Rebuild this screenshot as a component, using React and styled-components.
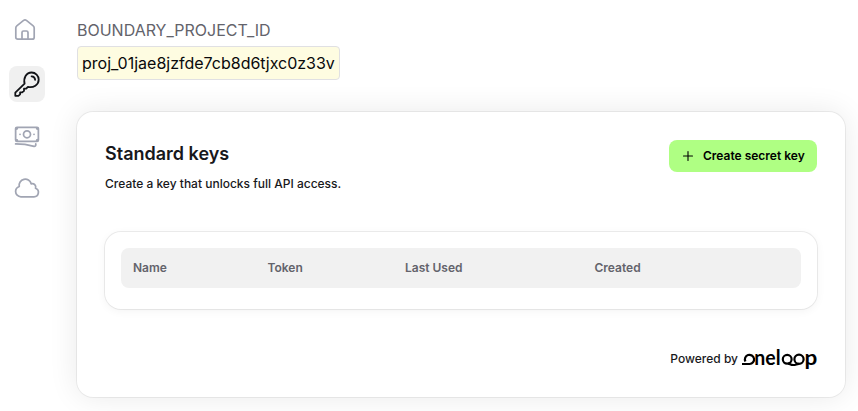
import React from "react";
import styled, { createGlobalStyle } from "styled-components";
import { HiOutlineBanknotes, HiOutlineCloud } from "react-icons/hi2";

const GlobalStyle = createGlobalStyle`
  * { box-sizing: border-box; }
  body { margin: 0; background: #fff; font-family: Inter, sans-serif; overflow: hidden; }
  h2, p { margin: 0; }
`;

const Page = styled.div`
  display: flex;
  width: 858px;
  height: 411px;
  overflow: hidden;
`;

const Sidebar = styled.nav`
  display: flex;
  flex-direction: column;
  gap: 16px;
  width: 77px;
  padding: 12px 9px;
`;

const NavItem = styled.a`
  display: flex;
  align-items: center;
  justify-content: center;
  width: 36px;
  height: 36px;
  border-radius: 8px;
  color: ${(p) => (p.$active ? "#111317" : "#a1a5b3")};
  background: ${(p) => (p.$active ? "#f0f0f0" : "transparent")};
  &:first-child { margin-bottom: 2px; }
`;

const Main = styled.main`
  display: flex;
  flex-direction: column;
  align-items: flex-start;
  width: 768px;
  padding-top: 18px;
`;

const ProjectLabel = styled.div`
  font-size: 16px;
  line-height: 24px;
  color: #63636b;
`;

const ProjectId = styled.div`
  margin-top: 4px;
  height: 34px;
  padding: 4px;
  border: 1px solid #e0e0e3;
  border-radius: 4px;
  background: #fefce1;
  color: #09090b;
  font-size: 16px;
  line-height: 24px;
`;

const Card = styled.section`
  width: 768px;
  height: 285px;
  margin-top: 32px;
  padding: 28px;
  border-radius: 16px;
  background: #fff;
  box-shadow: 0 0 0 1px rgba(0, 0, 0, 0.06), 0 0 30px rgba(0, 0, 0, 0.09);
`;

const CardHeader = styled.header`
  display: flex;
  justify-content: space-between;
  align-items: flex-start;
  height: 92px;
`;

const Title = styled.h2`
  font-size: 18px;
  line-height: 28px;
  font-weight: 600;
  color: #18181b;
`;

const Description = styled.p`
  margin-top: 6px;
  font-size: 12px;
  line-height: 20px;
  font-weight: 500;
  color: #18181b;
`;

const CreateButton = styled.button`
  display: flex;
  align-items: center;
  gap: 8px;
  height: 32px;
  width: 148px;
  padding: 0 12px;
  border: 0;
  border-radius: 8px;
  background: #afff83;
  color: #000;
  font: 600 12px/16px Inter, sans-serif;
  white-space: nowrap;
`;

const TableCard = styled.div`
  height: 77px;
  padding: 16px;
  border-radius: 16px;
  box-shadow: 0 0 0 1px rgba(0, 0, 0, 0.07), 0 2px 10px rgba(0, 0, 0, 0.05);
`;

const TableHead = styled.div`
  display: grid;
  grid-template-columns: 134.5px 137.5px 189.5px 1fr;
  align-items: center;
  height: 40px;
  padding-left: 12px;
  border-radius: 8px;
  background: #f1f1f1;
  color: #63636b;
  font-size: 12px;
  line-height: 16px;
  font-weight: 600;
`;

const Footer = styled.footer`
  display: flex;
  align-items: center;
  justify-content: flex-end;
  gap: 4px;
  margin-top: 36px;
  height: 28px;
  color: #18181b;
  font-size: 12px;
  line-height: 16px;
  font-weight: 500;
`;

const Stroke = styled.svg`
  display: block;
  fill: none;
  stroke: currentColor;
  stroke-linecap: round;
  stroke-linejoin: round;
`;

const Wordmark = styled.svg`
  display: block;
  overflow: visible;
  fill: none;
  stroke: #000;
  stroke-width: 2.2;
  text { fill: #000; stroke: none; font: 700 20.8px Lato, sans-serif; }
`;

const HomeIcon = () => (
  <Stroke width="28" height="28" viewBox="0 0 28 28" strokeWidth="1.7">
    <path d="M2.8 11.9Q2.8 10.6 3.8 9.8L10.6 4.4Q12 3.4 13.4 4.4L20.2 9.8Q21.2 10.6 21.2 11.9V21.2Q21.2 23.2 19.2 23.2H4.8Q2.8 23.2 2.8 21.2Z" />
    <path d="M9 23v-6.5q0-1.5 1.5-1.5h3q1.5 0 1.5 1.5V23" />
  </Stroke>
);

const KeyIcon = () => (
  <Stroke width="28" height="28" viewBox="0 0 28 28" strokeWidth="1.8">
    <path d="M11.6 13.6C10.2 8 13.2 2.5 18.6 2.5A7.1 7.1 0 0 1 25.7 9.6C25.7 15 20.4 18.1 14.9 16.9L13.2 18.7H11V20.9L9.2 22.4H7.1V24.3L5.4 25.8H2.3V22.7Z" />
    <path d="M18.6 6.3q3.3.2 3.5 3.5" />
  </Stroke>
);

const OneloopLogo = () => (
  <Wordmark width="75" height="28" viewBox="0 -0.7 75 28">
    <path d="M0 18.3H7.6A4.6 4.6 0 1 0 3.4 15.8" />
    <text x="12.3" y="19.3" textLength="26.3" lengthAdjust="spacingAndGlyphs">nel</text>
    <circle cx="45.2" cy="13.6" r="4.4" />
    <circle cx="57" cy="13.6" r="4.6" />
    <path d="M46 18C48 18 48.4 19.3 51.2 19.3C54 19.3 54.4 18.2 57 18.2" />
    <text x="62.5" y="19.3" textLength="12.8" lengthAdjust="spacingAndGlyphs">p</text>
  </Wordmark>
);

export default function App() {
  return (
    <>
      <GlobalStyle />
      <Page>
        <Sidebar>
          <NavItem><HomeIcon /></NavItem>
          <NavItem $active><KeyIcon /></NavItem>
          <NavItem><HiOutlineBanknotes size={28} /></NavItem>
          <NavItem><HiOutlineCloud size={28} /></NavItem>
        </Sidebar>
        <Main>
          <ProjectLabel>BOUNDARY_PROJECT_ID</ProjectLabel>
          <ProjectId>proj_01jae8jzfde7cb8d6tjxc0z33v</ProjectId>
          <Card>
            <CardHeader>
              <div>
                <Title>Standard keys</Title>
                <Description>Create a key that unlocks full API access.</Description>
              </div>
              <CreateButton>
                <Stroke width="14" height="14" viewBox="0 0 14 14" strokeWidth="1.1">
                  <path d="M7 2.5v9M2.5 7h9" />
                </Stroke>
                Create secret key
              </CreateButton>
            </CardHeader>
            <TableCard>
              <TableHead>
                <span>Name</span>
                <span>Token</span>
                <span>Last Used</span>
                <span>Created</span>
              </TableHead>
            </TableCard>
            <Footer>
              Powered by
              <OneloopLogo />
            </Footer>
          </Card>
        </Main>
      </Page>
    </>
  );
}
